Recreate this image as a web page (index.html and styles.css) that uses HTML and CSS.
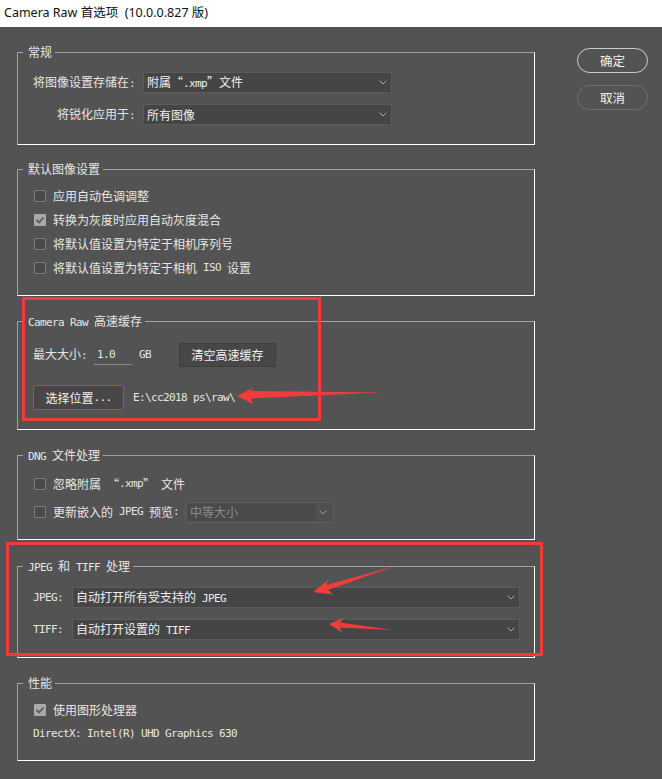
FILE: index.html
```html
<!DOCTYPE html>
<html lang="zh-CN">
<head>
<meta charset="utf-8">
<title>Camera Raw 首选项</title>
<link rel="stylesheet" href="styles.css">
</head>
<body>
<div class="titlebar">Camera Raw 首选项&nbsp; (10.0.0.827 版)</div>
<div class="dialog">
  <div class="groups">
    <section class="group g1">
      <div class="legend">常规</div>
      <div class="gbody">
        <div class="frow">
          <span class="flabel">将图像设置存储在<span class="m">:</span></span>
          <div class="select w1"><span class="stext">附属“<span class="m">.xmp</span>”文件</span><svg class="chev" width="8" height="5" viewBox="0 0 8 5"><polyline points="0.5,0.5 4,4 7.5,0.5" fill="none" stroke="#a8a8a8" stroke-width="1"/></svg></div>
        </div>
        <div class="frow gap">
          <span class="flabel">将锐化应用于<span class="m">:</span></span>
          <div class="select w1"><span class="stext">所有图像</span><svg class="chev" width="8" height="5" viewBox="0 0 8 5"><polyline points="0.5,0.5 4,4 7.5,0.5" fill="none" stroke="#a8a8a8" stroke-width="1"/></svg></div>
        </div>
      </div>
    </section>

    <section class="group g2">
      <div class="legend">默认图像设置</div>
      <div class="gbody">
        <div class="crow"><span class="cb"></span>应用自动色调调整</div>
        <div class="crow"><span class="cb on"><svg width="10" height="10" viewBox="0 0 10 10"><polyline points="1.5,5 4,7.5 8.5,2.5" fill="none" stroke="#5a5a5a" stroke-width="1.8"/></svg></span>转换为灰度时应用自动灰度混合</div>
        <div class="crow"><span class="cb"></span>将默认值设置为特定于相机序列号</div>
        <div class="crow"><span class="cb"></span>将默认值设置为特定于相机<span class="m"> ISO </span>设置</div>
      </div>
    </section>

    <section class="group g3">
      <div class="legend"><span class="m">Camera Raw </span>高速缓存</div>
      <div class="gbody">
        <div class="cache-row">
          <span>最大大小<span class="m">:</span></span>
          <span class="size-input"><span class="m">1.0</span></span>
          <span class="m unit">GB</span>
          <span class="btn purge">清空高速缓存</span>
        </div>
        <div class="cache-row second">
          <span class="btn choose">选择位置<span class="m">...</span></span>
          <span class="m path">E:\cc2018 ps\raw\</span>
        </div>
      </div>
    </section>

    <section class="group g4">
      <div class="legend"><span class="m">DNG </span>文件处理</div>
      <div class="gbody">
        <div class="crow"><span class="cb"></span>忽略附属<span class="m"> </span>“<span class="m">.xmp</span>”<span class="m"> </span>文件</div>
        <div class="crow second">
          <span class="cb"></span>更新嵌入的<span class="m"> JPEG </span>预览<span class="m">:</span>
          <div class="select w2 disabled"><span class="stext inner">中等大小</span><svg class="chev" width="8" height="5" viewBox="0 0 8 5"><polyline points="0.5,0.5 4,4 7.5,0.5" fill="none" stroke="#9a9a9a" stroke-width="1"/></svg></div>
        </div>
      </div>
    </section>

    <section class="group g5">
      <div class="legend"><span class="m">JPEG </span>和<span class="m"> TIFF </span>处理</div>
      <div class="gbody">
        <div class="jrow">
          <span class="jlabel m">JPEG:</span>
          <div class="select w3"><span class="stext">自动打开所有受支持的<span class="m"> JPEG</span></span><svg class="chev" width="8" height="5" viewBox="0 0 8 5"><polyline points="0.5,0.5 4,4 7.5,0.5" fill="none" stroke="#a8a8a8" stroke-width="1"/></svg></div>
        </div>
        <div class="jrow gap">
          <span class="jlabel m">TIFF:</span>
          <div class="select w3"><span class="stext">自动打开设置的<span class="m"> TIFF</span></span><svg class="chev" width="8" height="5" viewBox="0 0 8 5"><polyline points="0.5,0.5 4,4 7.5,0.5" fill="none" stroke="#a8a8a8" stroke-width="1"/></svg></div>
        </div>
      </div>
    </section>

    <section class="group g6">
      <div class="legend">性能</div>
      <div class="gbody">
        <div class="crow"><span class="cb on"><svg width="10" height="10" viewBox="0 0 10 10"><polyline points="1.5,5 4,7.5 8.5,2.5" fill="none" stroke="#5a5a5a" stroke-width="1.8"/></svg></span>使用图形处理器</div>
        <div class="gpu m">DirectX: Intel(R) UHD Graphics 630</div>
      </div>
    </section>
  </div>

  <div class="side">
    <span class="pill ok">确定</span>
    <span class="pill cancel">取消</span>
  </div>
</div>

<svg class="overlay" width="662" height="779" viewBox="0 0 662 779">
  <rect x="23.5" y="298.5" width="296" height="121" fill="none" stroke="#f23b3b" stroke-width="3"/>
  <rect x="7.5" y="543.5" width="534" height="111" fill="none" stroke="#f23b3b" stroke-width="3"/>
  <polygon fill="#f23b3b" points="237,396 253.5,387.5 251,391 382,392.5 251,398.5 253,404"/>
  <polygon fill="#f23b3b" points="313,592 328.1,579.9 326.5,585.1 395,566 328.1,589.9 333,594.5"/>
  <polygon fill="#f23b3b" points="329,624 343.7,617.8 340.2,622.5 392,630 339.8,627.5 342.3,632.8"/>
</svg>
</body>
</html>
```

FILE: styles.css
```css
* { box-sizing: border-box; }

body {
  margin: 0;
  background: #535353;
  font-family: "Noto Sans CJK SC", sans-serif;
  font-size: 12px;
  line-height: 16px;
  color: #e6e6e6;
  position: relative;
  width: 662px;
  height: 779px;
  overflow: hidden;
}

.m {
  font-family: "DejaVu Sans Mono", "Noto Sans CJK SC", monospace;
  font-size: 11px;
  letter-spacing: -0.62px;
  white-space: pre;
}

.titlebar {
  height: 27px;
  background: #fff;
  color: #111;
  font-family: "Noto Sans", "Noto Sans CJK SC", sans-serif;
  font-size: 12.5px;
  line-height: 25px;
  padding-left: 4px;
  white-space: pre;
}

.dialog {
  display: flex;
  align-items: flex-start;
}

.groups {
  margin-left: 17px;
  width: 518px;
  display: flex;
  flex-direction: column;
}

.group {
  border: 1px solid;
  border-color: #a2a2a2 #ffffff #ffffff #a2a2a2;
}

.legend {
  display: table;
  height: 16px;
  margin: -9px 0 -7px 5px;
  padding: 0 3px 0 5px;
  background: #535353;
  white-space: pre;
}

.g1 { margin-top: 25px; height: 93px; }
.g2 { margin-top: 24px; height: 127px; }
.g3 { margin-top: 25px; height: 109px; }
.g4 { margin-top: 25px; height: 85px; }
.g5 { margin-top: 26px; height: 92px; }
.g6 { margin-top: 25px; height: 78px; }

.g1 .gbody { padding-top: 19px; }
.g2 .gbody { padding-top: 14px; }
.g3 .gbody { padding-top: 19px; }
.g4 .gbody { padding-top: 14px; }
.g5 .gbody { padding-top: 18px; }
.g6 .gbody { padding-top: 14px; }

/* general rows */
.frow {
  display: flex;
  align-items: center;
  height: 21px;
}
.frow.gap { margin-top: 11px; }
.flabel {
  width: 117px;
  margin-right: 8px;
  text-align: right;
  white-space: nowrap;
}

.select {
  display: flex;
  align-items: center;
  height: 21px;
  background: #454545;
  border: 1px solid #5b5b5b;
  border-radius: 2px;
  padding: 0 4px 0 3px;
  color: #f0f0f0;
  white-space: nowrap;
}
.select .chev { margin-left: auto; }
.w1 { width: 249px; }
.w2 { width: 149px; margin-left: 6px; }
.w3 { width: 448px; }

.select.disabled {
  background: #505050;
  border-color: #5e5e5e;
  padding: 1px 6px 1px 2px;
  color: #8c8c8c;
}
.stext.inner {
  display: flex;
  align-items: center;
  height: 100%;
  width: 128px;
  padding-left: 2px;
  background: #4a4a4a;
}

/* checkbox rows */
.crow {
  display: flex;
  align-items: center;
  height: 24px;
  padding-left: 16px;
  white-space: nowrap;
}
.g4 .crow.second { margin-top: 4px; }

.cb {
  width: 12px;
  height: 12px;
  flex: none;
  margin-right: 7px;
  border: 1px solid #7a7a7a;
  background: #4b4b4b;
  border-radius: 1px;
  display: flex;
  align-items: center;
  justify-content: center;
}
.cb.on {
  background: #a9a9a9;
  border-color: #a9a9a9;
}

/* cache rows */
.cache-row {
  display: flex;
  align-items: center;
  height: 24px;
  padding-left: 15px;
  white-space: nowrap;
}
.cache-row.second {
  margin-top: 18px;
  height: 25px;
}
.size-input {
  width: 38px;
  height: 19px;
  margin-left: 7px;
  margin-top: 1px;
  padding: 0 0 0 3px;
  border-bottom: 1px solid #8a8a8a;
  display: flex;
  align-items: center;
}
.unit { margin-left: 7px; }

.btn {
  display: flex;
  align-items: center;
  justify-content: center;
  height: 100%;
  background: #474747;
  border: 1px solid #3d3d3d;
  border-radius: 2px;
  color: #f2f2f2;
}
.purge { width: 97px; margin-left: 28px; }
.choose {
  width: 91px;
  border-color: #3b6fbf;
}
.path { margin-left: 9px; }

/* jpeg / tiff */
.jrow {
  display: flex;
  align-items: center;
  height: 21px;
  padding-left: 15px;
}
.jrow.gap { margin-top: 11px; }
.jlabel { width: 39px; }

.gpu {
  display: block;
  margin-top: 4px;
  padding-left: 15px;
  height: 16px;
}

/* side buttons */
.side {
  margin-left: 42px;
  margin-top: 21px;
  display: flex;
  flex-direction: column;
  gap: 12px;
}
.pill {
  width: 71px;
  height: 25px;
  border-radius: 13px;
  border: 1px solid #cccccc;
  display: flex;
  align-items: center;
  justify-content: center;
  color: #f2f2f2;
  font-size: 12.5px;
}
.pill.cancel { border-color: #6e6e6e; }

.overlay {
  position: absolute;
  left: 0;
  top: 0;
  pointer-events: none;
}
```
